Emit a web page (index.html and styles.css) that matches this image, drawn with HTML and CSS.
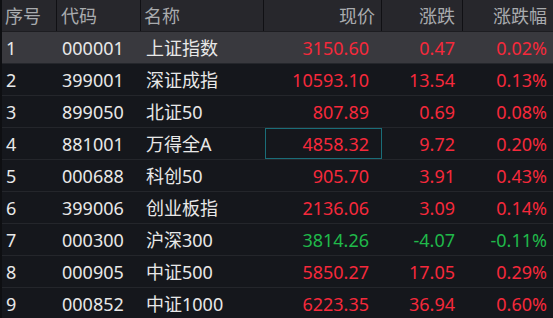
FILE: index.html
```html
<!DOCTYPE html>
<html lang="zh">
<head>
<meta charset="utf-8">
<link rel="stylesheet" href="styles.css">
</head>
<body>
<div class="table">
  <div class="row head">
    <div class="c c1">序号</div>
    <div class="c c2">代码</div>
    <div class="c c3">名称</div>
    <div class="c c4 r">现价</div>
    <div class="c c5 r">涨跌</div>
    <div class="c c6 r">涨跌幅</div>
  </div>
  <div class="row sel">
    <div class="c c1">1</div><div class="c c2">000001</div><div class="c c3">上证指数</div>
    <div class="c c4 r up">3150.60</div><div class="c c5 r up">0.47</div><div class="c c6 r up">0.02%</div>
  </div>
  <div class="row">
    <div class="c c1">2</div><div class="c c2">399001</div><div class="c c3">深证成指</div>
    <div class="c c4 r up">10593.10</div><div class="c c5 r up">13.54</div><div class="c c6 r up">0.13%</div>
  </div>
  <div class="row">
    <div class="c c1">3</div><div class="c c2">899050</div><div class="c c3">北证50</div>
    <div class="c c4 r up">807.89</div><div class="c c5 r up">0.69</div><div class="c c6 r up">0.08%</div>
  </div>
  <div class="row">
    <div class="c c1">4</div><div class="c c2">881001</div><div class="c c3">万得全A</div>
    <div class="c c4 r up focus">4858.32</div><div class="c c5 r up">9.72</div><div class="c c6 r up">0.20%</div>
  </div>
  <div class="row">
    <div class="c c1">5</div><div class="c c2">000688</div><div class="c c3">科创50</div>
    <div class="c c4 r up">905.70</div><div class="c c5 r up">3.91</div><div class="c c6 r up">0.43%</div>
  </div>
  <div class="row">
    <div class="c c1">6</div><div class="c c2">399006</div><div class="c c3">创业板指</div>
    <div class="c c4 r up">2136.06</div><div class="c c5 r up">3.09</div><div class="c c6 r up">0.14%</div>
  </div>
  <div class="row">
    <div class="c c1">7</div><div class="c c2">000300</div><div class="c c3">沪深300</div>
    <div class="c c4 r down">3814.26</div><div class="c c5 r down">-4.07</div><div class="c c6 r down">-0.11%</div>
  </div>
  <div class="row">
    <div class="c c1">8</div><div class="c c2">000905</div><div class="c c3">中证500</div>
    <div class="c c4 r up">5850.27</div><div class="c c5 r up">17.05</div><div class="c c6 r up">0.29%</div>
  </div>
  <div class="row">
    <div class="c c1">9</div><div class="c c2">000852</div><div class="c c3">中证1000</div>
    <div class="c c4 r up">6223.35</div><div class="c c5 r up">36.94</div><div class="c c6 r up">0.60%</div>
  </div>
</div>
</body>
</html>
```

FILE: styles.css
```css
html, body {
  margin: 0;
  padding: 0;
  background: #15171c;
  overflow: hidden;
}
.table {
  width: 553px;
  font-family: "Noto Sans", "Noto Sans CJK SC", sans-serif;
  font-size: 18px;
  color: #e8e8e8;
  border-left: 2px solid #0e0f12;
  box-sizing: border-box;
}
.row {
  display: grid;
  grid-template-columns: 55px 84px 123px 118px 81px 90px;
  height: 32px;
  border-bottom: 1px solid #24262b;
  box-sizing: border-box;
  background: #15171c;
}
.row.head {
  background: #27272c;
  color: #a9abae;
  border-bottom: 1px solid #1d1d21;
}
.row.sel {
  background: #39393e;
}
.c {
  display: flex;
  align-items: center;
  padding: 0 4px;
  white-space: nowrap;
  box-sizing: border-box;
  line-height: 1;
}
.c1 { padding-left: 4px; }
.c2, .c3 { padding-left: 5px; }
.head .c {
  border-right: 1px solid #101014;
  padding-top: 1px;
}
.head .c1 { padding-left: 3px; }
.head .c2 { padding-left: 4px; }
.head .c3 { padding-left: 3px; }
.head .c6 { border-right: none; }
.r { justify-content: flex-end; }
.c4 { padding-right: 13px; }
.head .c4 { padding-right: 6px; }
.c5 { padding-right: 8px; }
.head .c5 { padding-right: 7px; }
.c6 { padding-right: 6px; }
.up { color: #f5293b; }
.down { color: #20b94a; }
.focus {
  outline: 1px solid #1a6d78;
  outline-offset: -1px;
  margin-left: 1px;
}
```
